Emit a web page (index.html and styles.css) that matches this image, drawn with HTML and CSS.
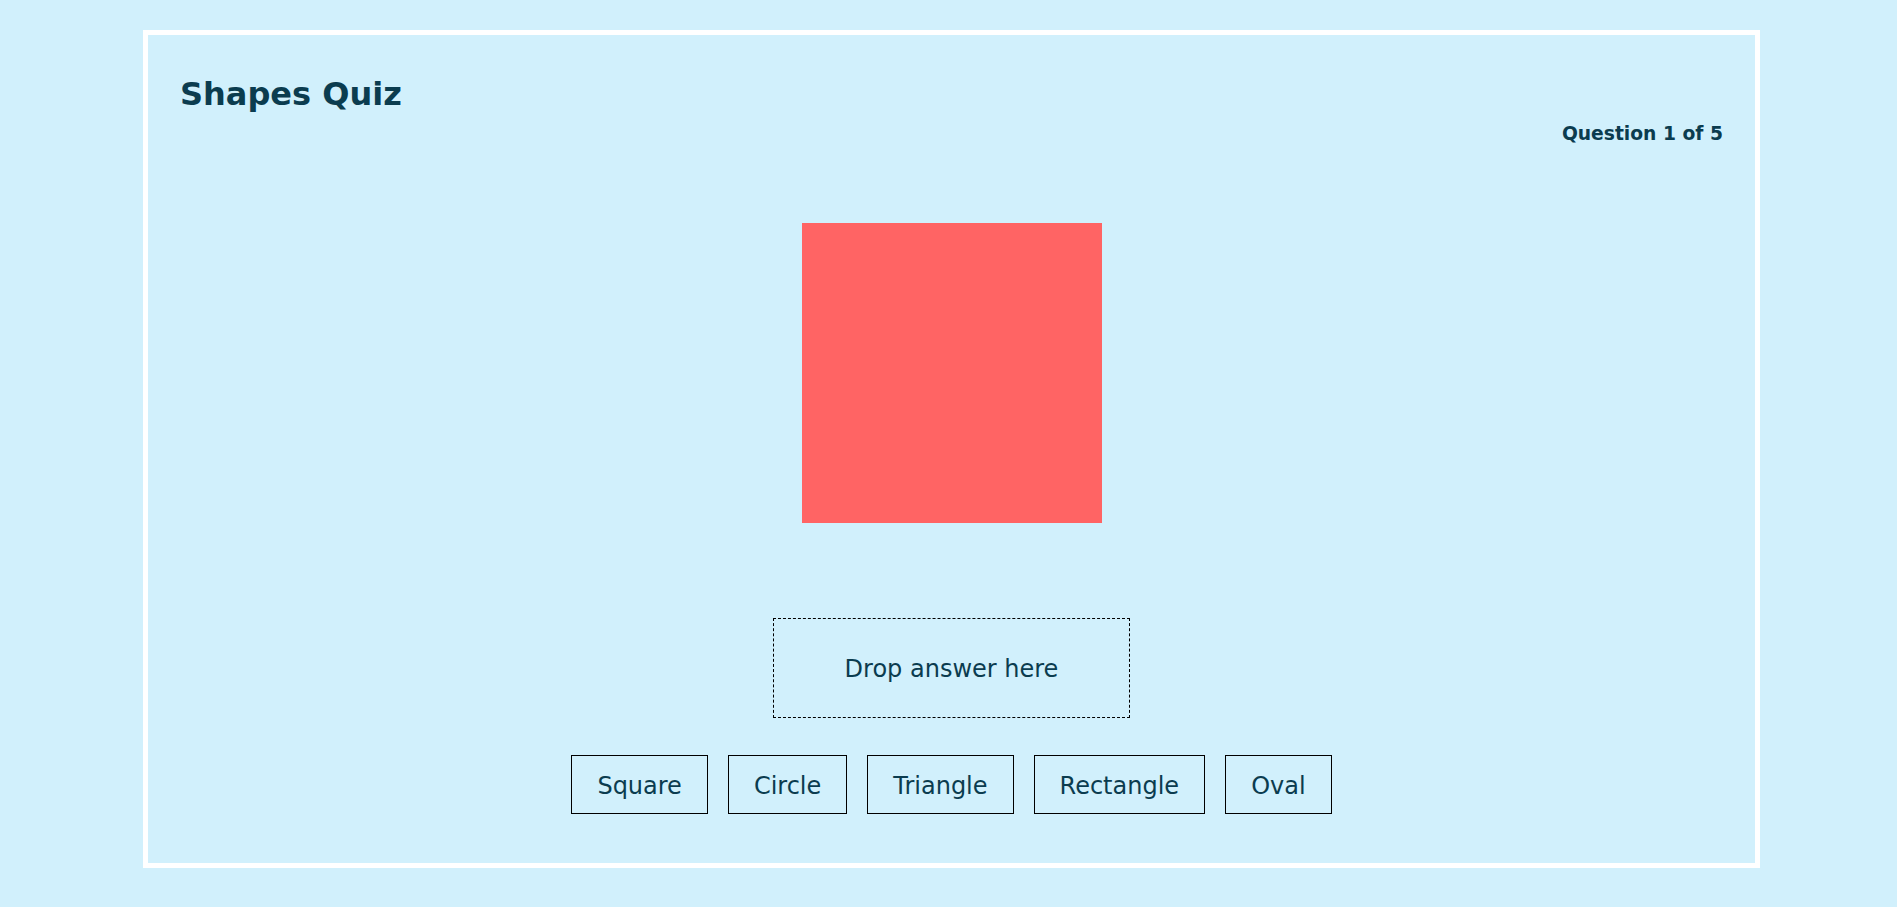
FILE: index.html
```html
<!DOCTYPE html>
<html lang="en">
<head>
<meta charset="utf-8">
<title>Shapes Quiz</title>
<link rel="stylesheet" href="styles.css">
</head>
<body>
<div class="quiz">
  <h1 class="quiz-title">Shapes Quiz</h1>
  <div class="progress">Question 1 of 5</div>
  <div class="shape-area">
    <div class="shape shape-square"></div>
  </div>
  <div class="drop-row">
    <div class="drop-zone">Drop answer here</div>
  </div>
  <div class="options">
    <div class="option">Square</div>
    <div class="option">Circle</div>
    <div class="option">Triangle</div>
    <div class="option">Rectangle</div>
    <div class="option">Oval</div>
  </div>
</div>
</body>
</html>
```

FILE: styles.css
```css
html, body {
  margin: 0;
  padding: 0;
  background: #d1f0fc;
}

body {
  font-family: "DejaVu Sans", Verdana, sans-serif;
  color: #0b3c4f;
}

.quiz {
  box-sizing: border-box;
  width: 1617px;
  margin: 30px 0 0 143px;
  border: 5px solid #ffffff;
  padding: 41px 32px 49px 32px;
}

.quiz-title {
  margin: 0;
  font-size: 32px;
  font-weight: bold;
  line-height: 37px;
}

.progress {
  margin-top: 10px;
  text-align: right;
  font-size: 18.72px;
  font-weight: bold;
  line-height: 22px;
}

.shape-area {
  display: flex;
  justify-content: center;
  margin-top: 78px;
}

.shape-square {
  width: 300px;
  height: 300px;
  background: #ff6464;
}

.drop-row {
  display: flex;
  justify-content: center;
  margin-top: 95px;
}

.drop-zone {
  box-sizing: border-box;
  width: 357px;
  height: 100px;
  padding-top: 2px;
  border: 1px dashed #000;
  display: flex;
  align-items: center;
  justify-content: center;
  font-size: 24px;
}

.options {
  display: flex;
  justify-content: center;
  gap: 20px;
  margin-top: 37px;
}

.option {
  border: 1px solid #000;
  padding: 17px 25px 13px 25px;
  font-size: 24px;
  line-height: 27px;
}
```
